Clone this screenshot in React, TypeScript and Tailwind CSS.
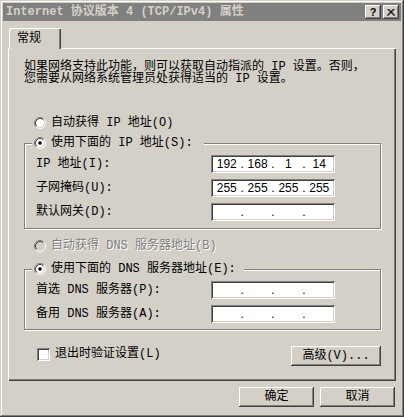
import React from 'react'

const raised = 'shadow-[inset_-1px_-1px_#404040,inset_1px_1px_#ffffff,inset_-2px_-2px_#808080]'
const sunken = 'shadow-[inset_1px_1px_#808080,inset_-1px_-1px_#ffffff,inset_2px_2px_#404040,inset_-2px_-2px_#d4d0c8]'
const etched = 'border border-[#808080] shadow-[inset_1px_1px_#ffffff,1px_1px_#ffffff]'

function Radio({ checked, disabled }: { checked?: boolean; disabled?: boolean }) {
    return (
        <svg width="12" height="12" viewBox="0 0 12 12" className="shrink-0">
            <circle cx="6" cy="6" r="5" fill={disabled ? '#d4d0c8' : '#ffffff'} />
            <path d="M9.89 2.11A5.5 5.5 0 0 0 2.11 9.89" stroke="#808080" fill="none" />
            <path d="M2.11 9.89A5.5 5.5 0 0 0 9.89 2.11" stroke="#ffffff" fill="none" />
            <path d="M9.18 2.82A4.5 4.5 0 0 0 2.82 9.18" stroke="#404040" fill="none" />
            <path d="M2.82 9.18A4.5 4.5 0 0 0 9.18 2.82" stroke="#d4d0c8" fill="none" />
            {checked && <circle cx="6" cy="6" r="1.8" fill="#000000" />}
        </svg>
    )
}

function RadioRow({ label, checked, disabled }: { label: string; checked?: boolean; disabled?: boolean }) {
    return (
        <div className="flex items-center gap-[5px] h-[16px]">
            <Radio checked={checked} disabled={disabled} />
            <span className={disabled ? 'text-[#808080] [text-shadow:1px_1px_0_#ffffff]' : 'text-black'}>{label}</span>
        </div>
    )
}

// IP address box with four segments split by dots
function IpField({ parts }: { parts: string[] }) {
    return (
        <div className={`w-[124px] h-[18px] bg-white ${sunken} flex items-center px-[2px] text-[12px] [font-family:'Liberation_Sans',sans-serif] text-black`}>
            {parts.map((p, i) => (
                <React.Fragment key={i}>
                    <span className="flex-1 text-center leading-[14px]">{p}</span>
                    {i < 3 && <span className="leading-[14px]">.</span>}
                </React.Fragment>
            ))}
        </div>
    )
}

function FieldRow({ label, parts }: { label: string; parts: string[] }) {
    return (
        <div className="flex items-center h-[18px]">
            <span className="w-[175px]">{label}</span>
            <IpField parts={parts} />
        </div>
    )
}

const empty = ['', '', '', '']

export default function App() {
    return (
        <div className={`relative w-[404px] h-[417px] bg-[#d4d0c8] p-[3px] text-[12px] leading-[14px] text-black [font-family:'Liberation_Mono','Noto_Sans_CJK_SC',monospace] shadow-[inset_-1px_-1px_#404040,inset_1px_1px_#d4d0c8,inset_-2px_-2px_#808080,inset_2px_2px_#ffffff]`}>
            {/* Title bar */}
            <div className="h-[18px] bg-[#808080] flex items-center justify-between pl-[3px] pr-[2px]">
                <span className="font-bold text-[#d4d0c8] whitespace-pre">Internet 协议版本 4 (TCP/IPv4) 属性</span>
                <div className="flex gap-[2px]">
                    <div className={`w-[16px] h-[14px] bg-[#d4d0c8] ${raised} flex items-center justify-center font-bold text-[11px] leading-none [font-family:'Liberation_Sans',sans-serif]`}>?</div>
                    <div className={`w-[16px] h-[14px] bg-[#d4d0c8] ${raised} flex items-center justify-center`}>
                        <svg width="8" height="7" viewBox="0 0 8 7">
                            <path d="M0.5 0L7.5 7M1.5 0L8 6.5M7.5 0L0.5 7M6.5 0L0 6.5" stroke="#000" strokeWidth="1" />
                        </svg>
                    </div>
                </div>
            </div>

            <div className="pl-[5px] pt-[7px]">
                {/* Tab */}
                <div className={`relative z-10 ml-[1px] w-[52px] h-[21px] -mb-[1px] bg-[#d4d0c8] rounded-tl-[2px] shadow-[inset_1px_1px_#ffffff,inset_-1px_0_#404040,inset_-2px_0_#808080] pl-[8px] pt-[4px]`}>
                    常规
                </div>

                {/* Panel */}
                <div className="relative w-[388px] h-[333px] shadow-[inset_1px_1px_#ffffff,inset_-1px_-1px_#404040,inset_-2px_-2px_#808080] px-[16px] pt-[13px]">
                    <p className="leading-[12px] whitespace-pre">{'如果网络支持此功能，则可以获取自动指派的 IP 设置。否则，\n您需要从网络系统管理员处获得适当的 IP 设置。'}</p>

                    <div className="mt-[30px] pl-[10px]">
                        <RadioRow label="自动获得 IP 地址(O)" />
                    </div>

                    <div className={`relative mt-[12px] w-[357px] h-[86px] ${etched} pt-[11px] pl-[11px] flex flex-col gap-[6px]`}>
                        <div className="absolute -top-[9px] left-[7px] w-[172px] bg-[#d4d0c8] pl-[2px]">
                            <RadioRow label="使用下面的 IP 地址(S):" checked />
                        </div>
                        <FieldRow label="IP 地址(I):" parts={['192', '168', '1', '14']} />
                        <FieldRow label="子网掩码(U):" parts={['255', '255', '255', '255']} />
                        <FieldRow label="默认网关(D):" parts={empty} />
                    </div>

                    <div className="mt-[9px] pl-[10px]">
                        <RadioRow label="自动获得 DNS 服务器地址(B)" disabled />
                    </div>

                    <div className={`relative mt-[15px] w-[357px] h-[61px] ${etched} pt-[11px] pl-[11px] flex flex-col gap-[6px]`}>
                        <div className="absolute -top-[9px] left-[7px] w-[212px] bg-[#d4d0c8] pl-[2px]">
                            <RadioRow label="使用下面的 DNS 服务器地址(E):" checked />
                        </div>
                        <FieldRow label="首选 DNS 服务器(P):" parts={empty} />
                        <FieldRow label="备用 DNS 服务器(A):" parts={empty} />
                    </div>

                    <div className="mt-[16px] w-[357px] flex justify-between items-start">
                        <div className="flex items-center gap-[5px] ml-[13px] mt-[1px]">
                            <div className={`w-[13px] h-[13px] bg-white ${sunken}`} />
                            <span>退出时验证设置(L)</span>
                        </div>
                        <button className={`w-[90px] h-[20px] bg-[#d4d0c8] ${raised} flex items-center justify-center`}>
                            高级(V)...
                        </button>
                    </div>
                </div>

                {/* Dialog buttons */}
                <div className="mt-[6px] flex justify-end gap-[6px] w-[387px]">
                    <button className={`w-[75px] h-[20px] bg-[#d4d0c8] ${raised} flex items-center justify-center`}>确定</button>
                    <button className={`w-[75px] h-[20px] bg-[#d4d0c8] ${raised} flex items-center justify-center`}>取消</button>
                </div>
            </div>
        </div>
    )
}
